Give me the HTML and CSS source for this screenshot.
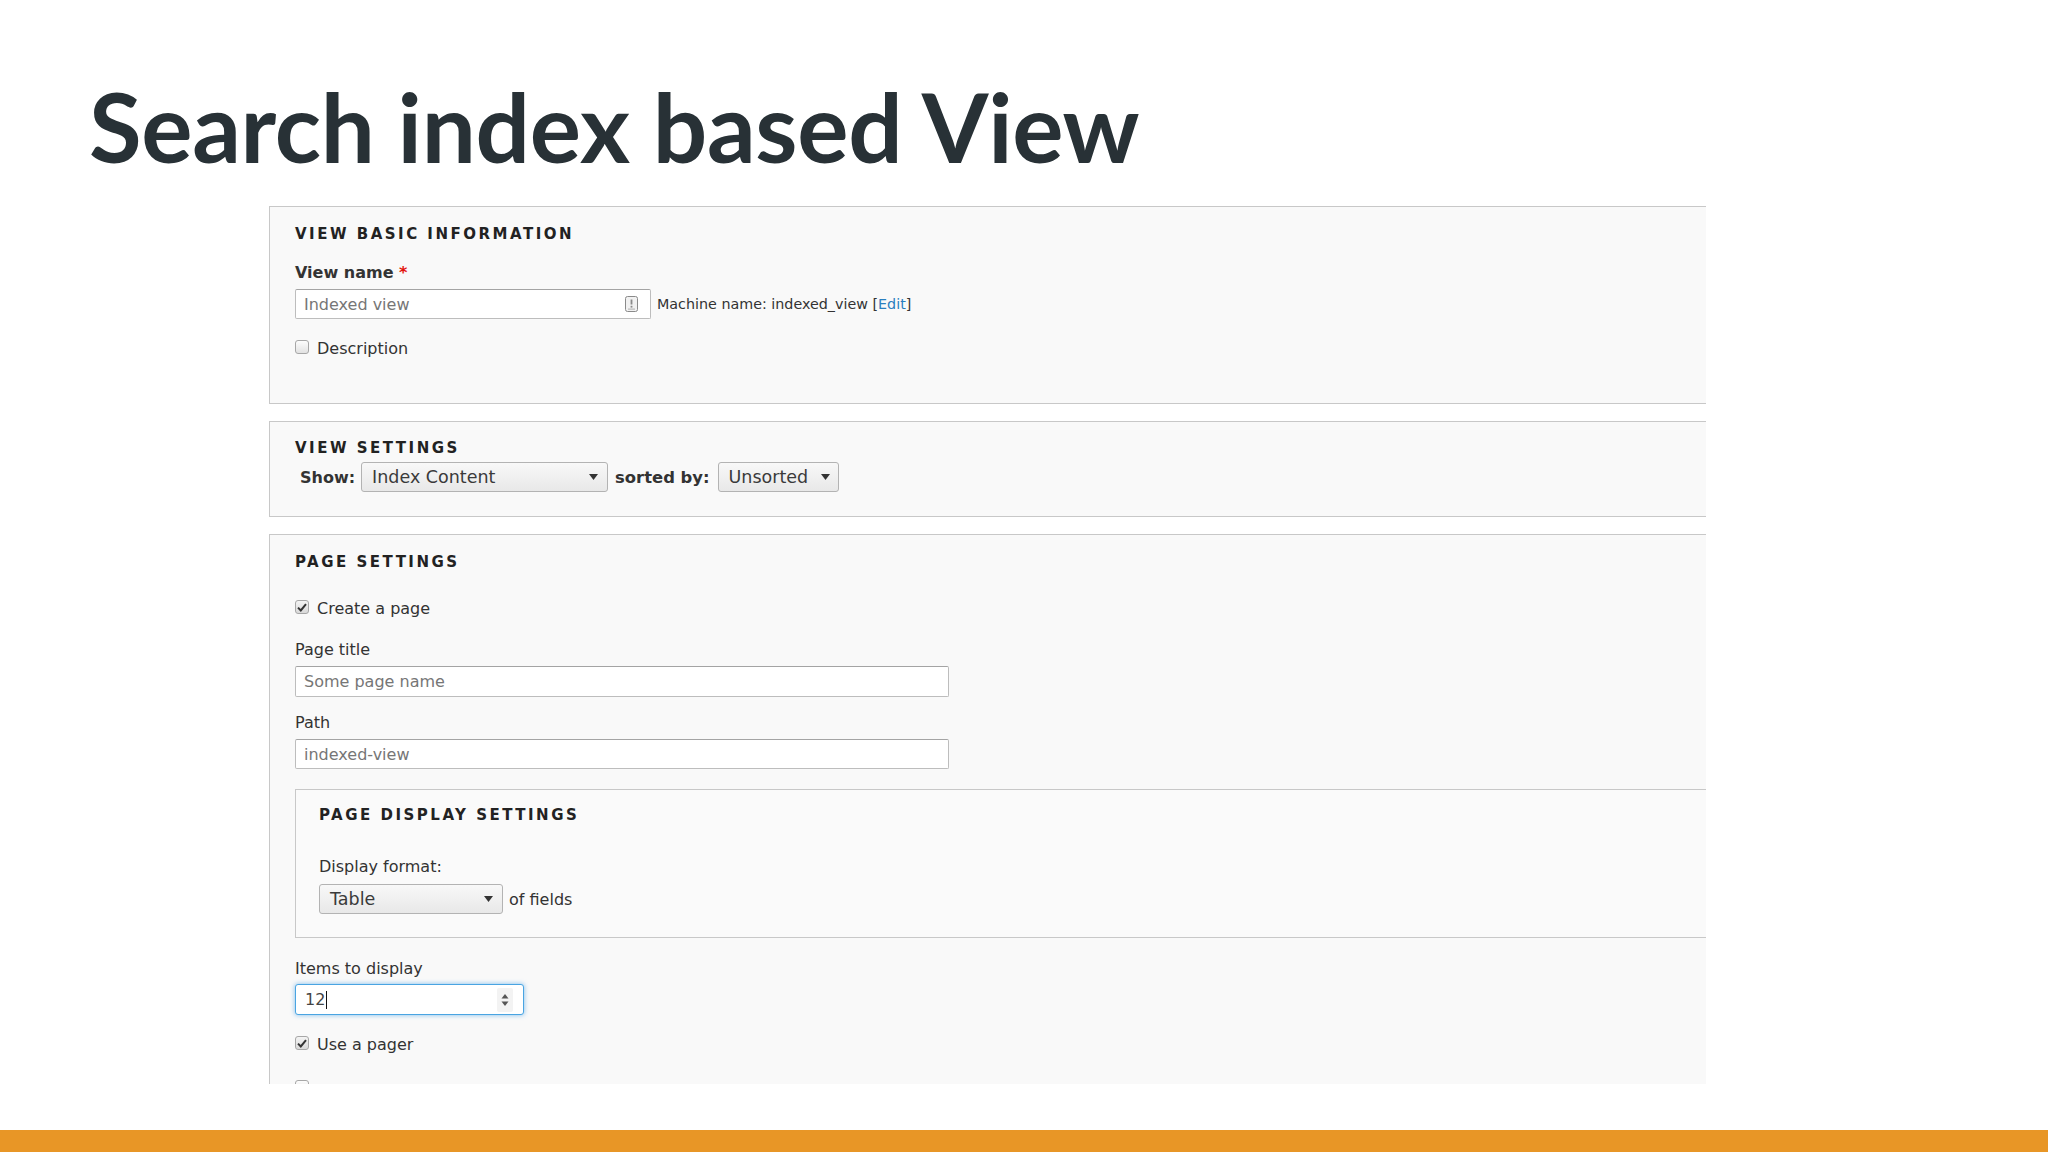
FILE: index.html
```html
<!DOCTYPE html>
<html lang="en">
<head>
<meta charset="utf-8">
<title>Search index based View</title>
<link rel="stylesheet" href="styles.css">
</head>
<body>
<div class="slide">
  <h1 class="title">Search index based View</h1>
  <div class="shot">
    <section class="fs fs-basic">
      <div class="legend">View basic information</div>
      <div class="label label-strong gap-19">View name <span class="req">*</span></div>
      <div class="name-row gap-6">
        <div class="input input-name">
          <span class="ph">Indexed view</span>
          <svg class="pw-icon" width="13" height="16" viewBox="0 0 13 16"><rect x="0.5" y="0.5" width="12" height="15" rx="2" fill="#f1f1f1" stroke="#8a8a8a"/><rect x="5.6" y="3.5" width="1.8" height="5" fill="#8a8a8a"/><rect x="5.6" y="9.8" width="1.8" height="1.8" fill="#8a8a8a"/><rect x="3" y="12.6" width="7" height="1" fill="#b0b0b0"/></svg>
        </div>
        <span class="machine">Machine name: indexed_view [<span class="link">Edit</span>]</span>
      </div>
      <div class="check-row gap-20"><span class="cb"></span><span>Description</span></div>
    </section>

    <section class="fs fs-view">
      <div class="legend">View settings</div>
      <div class="show-row">
        <span class="strong">Show:</span>
        <div class="select select-show"><span>Index Content</span><svg class="arrow" width="9" height="6" viewBox="0 0 9 6"><path d="M0 0H9L4.5 6Z" fill="#333"/></svg></div>
        <span class="strong sorted">sorted by:</span>
        <div class="select select-sort"><span>Unsorted</span><svg class="arrow" width="9" height="6" viewBox="0 0 9 6"><path d="M0 0H9L4.5 6Z" fill="#333"/></svg></div>
      </div>
    </section>

    <section class="fs fs-page">
      <div class="legend">Page settings</div>
      <div class="check-row gap-27"><span class="cb cb-on"><svg width="10" height="9" viewBox="0 0 10 9"><path d="M1 4.6L3.8 7.4L9 1.2" fill="none" stroke="#333" stroke-width="2"/></svg></span><span>Create a page</span></div>
      <div class="label gap-21">Page title</div>
      <div class="input input-wide h31 gap-6"><span class="ph">Some page name</span></div>
      <div class="label gap-16">Path</div>
      <div class="input input-wide gap-6"><span class="ph">indexed-view</span></div>

      <section class="fs-inner">
        <div class="legend">Page display settings</div>
        <div class="label gap-32">Display format:</div>
        <div class="format-row">
          <div class="select select-table"><span>Table</span><svg class="arrow" width="9" height="6" viewBox="0 0 9 6"><path d="M0 0H9L4.5 6Z" fill="#333"/></svg></div>
          <span class="plain">of fields</span>
        </div>
      </section>

      <div class="label gap-21">Items to display</div>
      <div class="input input-items">
        <span class="val">12</span><span class="caret"></span>
        <svg class="spin" width="16" height="24" viewBox="0 0 16 24"><rect x="0" y="0" width="16" height="24" rx="2" fill="#f3f3f3"/><path d="M4.5 10.5H11.5L8 6Z" fill="#555"/><path d="M4.5 13.5H11.5L8 18Z" fill="#555"/></svg>
      </div>
      <div class="check-row gap-20"><span class="cb cb-on"><svg width="10" height="9" viewBox="0 0 10 9"><path d="M1 4.6L3.8 7.4L9 1.2" fill="none" stroke="#333" stroke-width="2"/></svg></span><span>Use a pager</span></div>
      <div class="check-row gap-24"><span class="cb"></span></div>
    </section>
  </div>
  <div class="bar"></div>
</div>
</body>
</html>
```
FILE: styles.css
```css
* { box-sizing: border-box; }

html, body {
  margin: 0;
  padding: 0;
  background: #ffffff;
}

body {
  width: 2048px;
  height: 1152px;
  overflow: hidden;
  font-family: "DejaVu Sans", "Liberation Sans", sans-serif;
  color: #333;
}

.slide {
  display: flex;
  flex-direction: column;
  width: 2048px;
  height: 1152px;
}

.title {
  margin: 0;
  padding: 66px 0 0 89px;
  font-family: Lato, "Open Sans", sans-serif;
  font-weight: 700;
  font-size: 96px;
  line-height: 120px;
  letter-spacing: -0.3px;
  color: #283136;
  white-space: nowrap;
}

.shot {
  flex: none;
  margin: 20px 0 0 269px;
  width: 1437px;
  height: 878px;
  overflow: hidden;
}

.bar {
  margin-top: auto;
  height: 22px;
  background: #e89626;
}

/* fieldsets */
.fs {
  background: #f9f9f9;
  border: 1px solid #c8c8c8;
  border-right: none;
}

.fs-basic { padding: 17px 0 44px 25px; }
.fs-view { margin-top: 17px; padding: 16px 0 24px 25px; }
.fs-page { margin-top: 17px; padding: 17px 0 40px 25px; }

.fs-inner {
  margin-top: 20px;
  background: #fafafa;
  border: 1px solid #c8c8c8;
  border-right: none;
  padding: 15px 0 23px 23px;
}

.legend {
  font-weight: 700;
  font-size: 15px;
  line-height: 20px;
  letter-spacing: 2.5px;
  text-transform: uppercase;
  color: #222;
}

.label {
  font-size: 16px;
  line-height: 20px;
  color: #333;
}

.label-strong { font-weight: 700; }
.req { color: #e3110b; }

.gap-6 { margin-top: 6px; }
.gap-16 { margin-top: 16px; }
.gap-19 { margin-top: 19px; }
.gap-20 { margin-top: 20px; }
.gap-21 { margin-top: 21px; }
.gap-24 { margin-top: 24px; }
.gap-27 { margin-top: 27px; }
.gap-32 { margin-top: 32px; }

/* inputs */
.input {
  display: flex;
  align-items: center;
  height: 30px;
  padding: 0 0 0 8px;
  background: #fff;
  border: 1px solid #bdbdbd;
  border-top-color: #a4a4a4;
  border-radius: 2px;
  font-size: 16px;
  color: #444;
}

.ph { color: #767676; }

.name-row {
  display: flex;
  align-items: center;
  gap: 6px;
}

.input-name {
  width: 356px;
  justify-content: space-between;
  padding-right: 12px;
}

.machine {
  font-size: 14.3px;
  color: #333;
}

.link { color: #2a7fbf; }

.input-wide { width: 654px; }
.h31 { height: 31px; }

.input-items {
  margin-top: 5px;
  width: 229px;
  height: 31px;
  padding-left: 9px;
  padding-right: 10px;
  border: 1px solid #49a4e2;
  border-radius: 3px;
  box-shadow: 0 0 5px rgba(60, 155, 230, 0.65);
  color: #444;
}

.caret {
  width: 1px;
  height: 18px;
  background: #111;
  margin-left: 1px;
}

.spin { margin-left: auto; }

/* checkboxes */
.check-row {
  display: flex;
  align-items: flex-start;
  gap: 8px;
  min-height: 20px;
  font-size: 16px;
  line-height: 20px;
  color: #333;
}

.cb {
  flex: none;
  width: 14px;
  height: 14px;
  margin-top: 1px;
  border: 1px solid #a7a7a7;
  border-radius: 3px;
  background: linear-gradient(#fdfdfd, #e2e2e2);
  display: flex;
  align-items: center;
  justify-content: center;
}

.cb-on { background: linear-gradient(#f4f4f4, #d9d9d9); }

/* selects */
.show-row {
  display: flex;
  align-items: center;
  gap: 6px;
  margin-top: 4px;
  padding-left: 5px;
}

.strong {
  font-weight: 700;
  font-size: 16px;
  color: #333;
}

.sorted {
  font-size: 16.4px;
  margin: 0 2px 0 1px;
}

.select {
  display: flex;
  align-items: center;
  justify-content: space-between;
  height: 30px;
  padding: 0 9px 0 10px;
  border: 1px solid #b3b3b3;
  border-radius: 3px;
  background: linear-gradient(#f8f8f8, #e8e8e8);
  font-size: 17.5px;
  color: #3a3a3a;
}

.select-show { width: 247px; }
.select-sort { width: 121px; padding-right: 8px; }
.select-table { width: 184px; height: 30px; }

.format-row {
  display: flex;
  align-items: center;
  gap: 6px;
  margin-top: 7px;
}

.plain {
  font-size: 16px;
  color: #333;
}
```
